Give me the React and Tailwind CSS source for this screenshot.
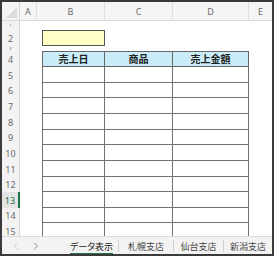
import { ChevronLeft, ChevronRight } from 'lucide-react';

const FONT = "[font-family:'Noto_Sans','Noto_Sans_CJK_JP',sans-serif] [font-feature-settings:'palt']";

// [label, height, kind]
const rows = [
  ['1', 9, 'none'],
  ['2', 16, 'yellow'],
  ['3', 5, 'none'],
  ['4', 16, 'head'],
  ['5', 16, 'body'],
  ['6', 15, 'body'],
  ['7', 16, 'body'],
  ['8', 16, 'body'],
  ['9', 15, 'body'],
  ['10', 16, 'body'],
  ['11', 16, 'body'],
  ['12', 15, 'body'],
  ['13', 16, 'body'],
  ['14', 15, 'body'],
  ['15', 16, 'body'],
];

const heights = {
  9: 'h-[9px]',
  16: 'h-[16px]',
  5: 'h-[5px]',
  15: 'h-[15px]',
};

function RowHeader({ label, active, tiny }) {
  return (
    <div
      className={`w-[18px] shrink-0 h-full flex items-center justify-center overflow-hidden leading-none border-r ${
        tiny ? 'text-[4px]' : 'text-[9px]'
      } ${
        active
          ? 'bg-[#e4e4e4] text-[#217346] border-r-2 border-[#217346]'
          : 'bg-[#f3f3f3] text-[#6a6a6a] border-[#d6d6d6]'
      }`}
    >
      {label}
    </div>
  );
}

function Row({ label, h, kind }) {
  const active = label === '13';
  return (
    <div className={`flex ${heights[h]} shrink-0`}>
      <RowHeader label={label} active={active} tiny={kind === 'none'} />
      <div className="w-[22px] shrink-0" />
      {kind === 'yellow' && (
        <div className="w-[63px] shrink-0 bg-[#ffffc6] border border-[#555]" />
      )}
      {kind === 'head' && (
        <>
          <div className="w-[63px] shrink-0 bg-[#c9ecf8] border border-[#666] flex items-center justify-center text-[10px] font-bold text-[#222] leading-none">
            売上日
          </div>
          <div className="w-[68px] shrink-0 bg-[#c9ecf8] border-y border-r border-[#666] flex items-center justify-center text-[10px] font-bold text-[#222] leading-none">
            商品
          </div>
          <div className="w-[76px] shrink-0 bg-[#c9ecf8] border-y border-r border-[#666] flex items-center justify-center text-[10px] font-bold text-[#222] leading-none">
            売上金額
          </div>
        </>
      )}
      {kind === 'body' && (
        <>
          <div className="w-[63px] shrink-0 border-x border-b border-[#707070]" />
          <div className="w-[68px] shrink-0 border-r border-b border-[#707070]" />
          <div className="w-[76px] shrink-0 border-r border-b border-[#707070]" />
        </>
      )}
    </div>
  );
}

function Tab({ label, active, className }) {
  return (
    <div className={`h-full flex items-center justify-center shrink-0 ${className}`}>
      <span
        className={`text-[9px] leading-[11px] pt-[1px] ${
          active
            ? 'text-[#222] border-b-2 border-[#1e7145] pb-[1px] mt-[3px]'
            : 'text-[#444]'
        }`}
      >
        {label}
      </span>
    </div>
  );
}

const Sep = () => <div className="w-px h-[12px] bg-[#d0d0d0] shrink-0" />;

export default function App() {
  return (
    <div className={`w-[274px] h-[256px] border-2 border-[#3a3a3a] bg-white flex flex-col overflow-hidden ${FONT}`}>
      <div className="h-[234px] shrink-0 overflow-hidden flex flex-col">
        {/* column headers */}
        <div className="flex h-[19px] shrink-0 bg-[#f5f5f5] border-b border-[#d6d6d6] text-[9px] text-[#6a6a6a] leading-none">
          <div className="w-[18px] shrink-0 relative border-r border-[#d6d6d6]">
            <svg className="absolute right-[2px] bottom-[2px]" width="11" height="11" viewBox="0 0 11 11">
              <polygon points="11,0 11,11 0,11" fill="#dcdcdc" />
            </svg>
          </div>
          <div className="w-[17px] shrink-0 flex items-center justify-center border-r border-[#e0e0e0]">A</div>
          <div className="w-[68px] shrink-0 flex items-center justify-center border-r border-[#e0e0e0]">B</div>
          <div className="w-[68px] shrink-0 flex items-center justify-center border-r border-[#e0e0e0]">C</div>
          <div className="w-[76px] shrink-0 flex items-center justify-center border-r border-[#e0e0e0]">D</div>
          <div className="flex-1 flex items-center justify-center overflow-hidden">E</div>
        </div>
        {rows.map(([label, h, kind]) => (
          <Row key={label} label={label} h={h} kind={kind} />
        ))}
      </div>

      {/* sheet tabs */}
      <div className="flex-1 flex items-center bg-[#f3f3f3] border-t border-[#dadada]">
        <div className="w-[50px] shrink-0 flex items-center h-full">
          <ChevronLeft size={12} strokeWidth={1.3} className="text-[#b3b3b3] ml-[8px]" />
          <ChevronRight size={12} strokeWidth={1.3} className="text-[#555] ml-[8px]" />
        </div>
        <div className="w-[13px] shrink-0" />
        <Tab label="データ表示" active className="w-[53px]" />
        <Sep />
        <Tab label="札幌支店" className="w-[54px]" />
        <Sep />
        <Tab label="仙台支店" className="w-[49px]" />
        <Sep />
        <Tab label="新潟支店" className="flex-1" />
      </div>
    </div>
  );
}
